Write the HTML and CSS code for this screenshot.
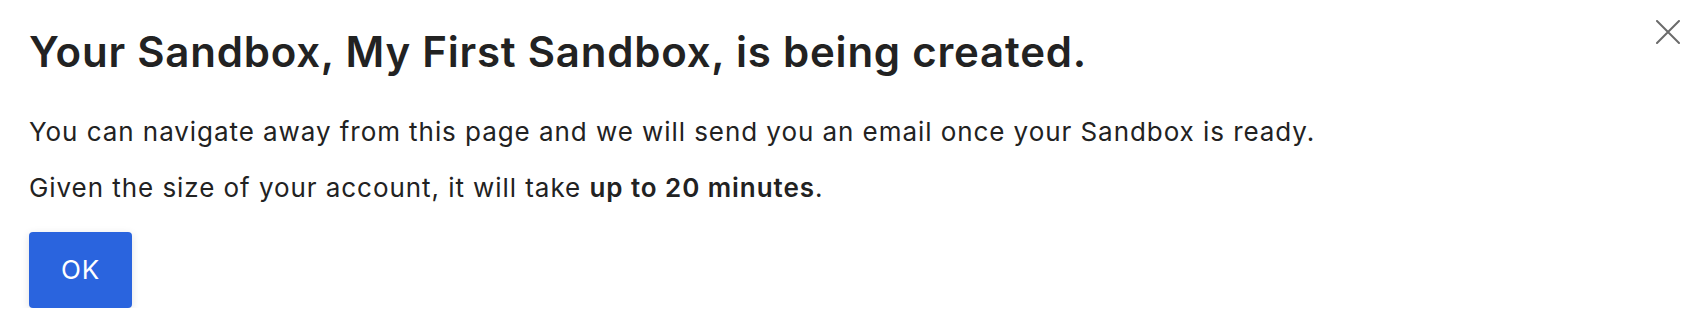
FILE: index.html
```html
<!DOCTYPE html>
<html lang="en">
<head>
<meta charset="utf-8">
<title>Sandbox</title>
<link rel="stylesheet" href="styles.css">
</head>
<body>
<div class="dialog">
  <button class="close" aria-label="Close">
    <svg width="24" height="24" viewBox="0 0 24 24"><path d="M1 1 L23 23 M23 1 L1 23" stroke="#6b6b6b" stroke-width="2" fill="none" stroke-linecap="round"/></svg>
  </button>
  <h1 class="title">Your Sandbox, My First Sandbox, is being created.</h1>
  <p class="text">You can navigate away from this page and we will send you an email once your Sandbox is ready.</p>
  <p class="text second">Given the size of your account, it will take <strong>up to 20 minutes</strong>.</p>
  <button class="ok">OK</button>
</div>
</body>
</html>
```

FILE: styles.css
```css
html, body {
  margin: 0;
  padding: 0;
  background: #ffffff;
}
body {
  font-family: "Inter", "Noto Sans", sans-serif;
  color: #222222;
}
.dialog {
  position: relative;
  padding: 27px 28px 0 29px;
}
.close {
  position: absolute;
  top: 20px;
  right: 22px;
  width: 24px;
  height: 24px;
  padding: 0;
  border: 0;
  background: none;
  display: flex;
}
.title {
  margin: 0;
  font-size: 42px;
  line-height: 50px;
  font-weight: 600;
  letter-spacing: 0.78px;
  color: #222222;
}
.text {
  margin: 37px 0 0;
  font-size: 26px;
  line-height: 36px;
  font-weight: 400;
  letter-spacing: 0.94px;
}
.text.second {
  margin-top: 20px;
}
.text strong {
  font-weight: 600;
}
.ok {
  margin-top: 26px;
  font-family: inherit;
  font-size: 26px;
  line-height: 36px;
  letter-spacing: 0.9px;
  color: #ffffff;
  background: #2a64de;
  border: 0;
  border-radius: 4px;
  padding: 20px 32px;
  box-shadow: 0 2px 8px rgba(0, 0, 0, 0.12);
}
```
